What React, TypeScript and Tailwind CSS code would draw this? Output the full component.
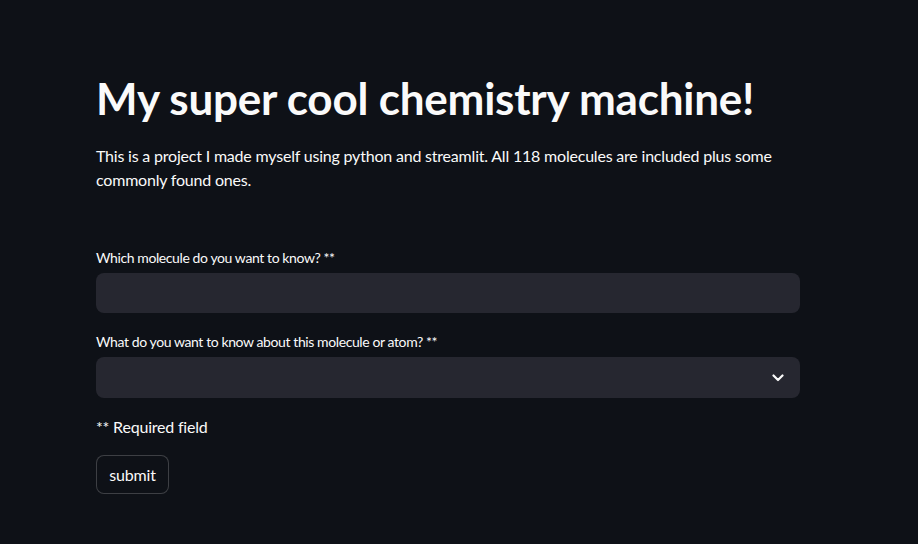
export default function App() {
  return (
    <div
      className="bg-[#0e1117] text-[#fafafa] min-h-[544px] w-full"
      style={{ fontFamily: 'Lato, "Liberation Sans", sans-serif' }}
    >
      <div className="ml-[96px] w-[704px] pt-[72px] flex flex-col">
        <h1 className="text-[44px] font-bold leading-[52px] tracking-[-0.22px] whitespace-nowrap">
          My super cool chemistry machine!
        </h1>
        <p className="mt-[20px] text-[16px] leading-[24px] tracking-[-0.2px] w-[700px]">
          This is a project I made myself using python and streamlit. All 118 molecules are included plus some commonly found ones.
        </p>

        <label className="mt-[56px] text-[14px] leading-[20px] tracking-[-0.4px]">
          Which molecule do you want to know? **
        </label>
        <div className="mt-[5px] h-[40px] rounded-[8px] bg-[#262730]" />

        <label className="mt-[19px] text-[14px] leading-[20px] tracking-[-0.4px]">
          What do you want to know about this molecule or atom? **
        </label>
        <div className="mt-[5px] h-[41px] rounded-[8px] bg-[#262730] flex items-center justify-end pr-[16px]">
          <svg width="12" height="8" viewBox="0 0 12 8" fill="none">
            <path d="M1.5 1.5 L6 6 L10.5 1.5" stroke="#fafafa" strokeWidth="2.2" strokeLinecap="round" strokeLinejoin="round" />
          </svg>
        </div>

        <p className="mt-[17px] text-[16px] leading-[24px] tracking-[-0.2px]">** Required field</p>

        <div className="mt-[16px]">
          <button className="h-[39px] w-[73px] rounded-[8px] border border-[rgba(250,250,250,0.2)] bg-[#0e1117] text-[16px] text-[#fafafa] tracking-[-0.2px]">
            submit
          </button>
        </div>
      </div>
    </div>
  );
}
